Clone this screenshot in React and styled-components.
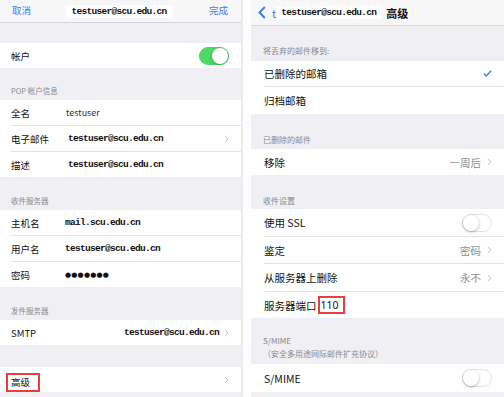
import React from 'react';
import styled, { createGlobalStyle } from 'styled-components';

const Global = createGlobalStyle`
  html, body { margin: 0; padding: 0; background: #fff; }
  body { font-family: "Noto Sans CJK SC", "Noto Sans", sans-serif; }
`;

const Page = styled.div`
  display: flex;
  width: 504px;
  height: 397px;
  overflow: hidden;
  background: #fff;
`;

const Panel = styled.div`
  flex: none;
  width: ${(p) => p.$w}px;
  height: 100%;
  margin-left: ${(p) => p.$ml || 0}px;
  background: #efeff4;
  border-right: ${(p) => (p.$edge ? '2px solid #e9ebf1' : 'none')};
  display: flex;
  flex-direction: column;
  overflow: hidden;
`;

const NavBar = styled.div`
  flex: none;
  height: ${(p) => p.$h}px;
  box-sizing: border-box;
  background: #f7f7f8;
  border-bottom: 1px solid #d6d6da;
  display: flex;
  align-items: center;
  justify-content: ${(p) => p.$justify || 'flex-start'};
  padding: ${(p) => p.$pad};
`;

const NavLink = styled.span`
  color: #3b7ef5;
  font-size: 9.5px;
  line-height: 1;
`;

const NavTitle = styled.span`
  background: #fff;
  font-family: "Liberation Mono", monospace;
  font-size: 9.5px;
  letter-spacing: -0.7px;
  font-weight: bold;
  color: #111;
  padding: 1px 6px 1px 4px;
  line-height: 11px;
`;

const BackGroup = styled.div`
  display: flex;
  align-items: center;
`;

const BlueT = styled.span`
  color: #3b7ef5;
  font-size: 11px;
  margin: 0 1px 0 6px;
`;

const NavHeading = styled.span`
  font-size: 11px;
  font-weight: 600;
  color: #111;
  margin-left: 4px;
`;

const Gap = styled.div`
  flex: none;
  height: ${(p) => p.$h}px;
`;

const SectionHeader = styled.div`
  flex: none;
  height: ${(p) => p.$h}px;
  box-sizing: border-box;
  display: flex;
  flex-direction: column;
  justify-content: flex-end;
  padding: 0 0 ${(p) => p.$pb}px ${(p) => p.$pl}px;
  font-size: ${(p) => p.$fs}px;
  line-height: 13px;
  color: #8a8a8f;
`;

const Group = styled.div`
  flex: none;
  background: #fff;
`;

const Row = styled.div`
  height: ${(p) => p.$h}px;
  display: flex;
  padding-left: ${(p) => p.$pl}px;
  &:last-child > div {
    border-bottom: none;
  }
`;

const RowInner = styled.div`
  flex: 1;
  display: flex;
  align-items: center;
  box-sizing: border-box;
  border-bottom: 1px solid #e4e4e7;
  padding-right: ${(p) => p.$pr}px;
  font-size: ${(p) => p.$fs}px;
  color: #111;
`;

const Label = styled.span`
  flex: none;
  width: ${(p) => (p.$w ? `${p.$w}px` : 'auto')};
  white-space: nowrap;
`;

const SansValue = styled.span`
  color: #333;
  font-size: 9px;
`;

const MonoValue = styled.span`
  font-family: "Liberation Mono", monospace;
  font-size: 9.5px;
  letter-spacing: -0.7px;
  font-weight: bold;
  color: #111;
  margin-left: ${(p) => p.$ml || 0}px;
  margin-right: ${(p) => p.$mr || 0}px;
  white-space: nowrap;
`;

const Dots = styled.span`
  font-family: "DejaVu Sans", sans-serif;
  font-size: 7px;
  letter-spacing: 0.2px;
  color: #111;
`;

const Spacer = styled.span`
  flex: 1;
`;

const Detail = styled.span`
  color: #8e8e93;
  font-size: 10.5px;
  margin-right: 6px;
`;

const Highlight = styled.span`
  border: 2px solid #e5403b;
  padding: ${(p) => p.$pad};
  margin-left: ${(p) => p.$ml || 0}px;
  line-height: 1;
  font-family: ${(p) => (p.$latin ? '"Noto Sans", sans-serif' : 'inherit')};
  align-self: ${(p) => p.$self || 'center'};
`;

const Track = styled.span`
  position: relative;
  flex: none;
  width: 30px;
  height: 18px;
  box-sizing: border-box;
  border-radius: 9px;
  background: ${(p) => (p.$on ? '#4cd964' : '#fff')};
  border: 1px solid ${(p) => (p.$on ? '#4cd964' : '#e3e3e6')};
`;

const Knob = styled.span`
  position: absolute;
  top: 0;
  left: ${(p) => (p.$on ? '12px' : '0')};
  width: 16px;
  height: 16px;
  border-radius: 50%;
  background: #fff;
  box-shadow: 0 1px 3px rgba(0, 0, 0, 0.28), 0 0 0 0.5px rgba(0, 0, 0, 0.06);
`;

const Toggle = ({ on }) => (
  <Track $on={on}>
    <Knob $on={on} />
  </Track>
);

const Chevron = () => (
  <svg width="5" height="8" viewBox="0 0 5 8">
    <path d="M0.8 0.8 L4 4 L0.8 7.2" fill="none" stroke="#c4c4c9" strokeWidth="1" />
  </svg>
);

const BackChevron = () => (
  <svg width="8" height="13" viewBox="0 0 8 13">
    <path d="M6.8 1 L1.5 6.5 L6.8 12" fill="none" stroke="#3b7ef5" strokeWidth="2" />
  </svg>
);

const Check = () => (
  <svg width="9" height="7" viewBox="0 0 9 7">
    <path d="M0.8 3.6 L3.2 6 L8.2 0.8" fill="none" stroke="#3b7ef5" strokeWidth="1.4" />
  </svg>
);

const EMAIL = 'testuser@scu.edu.cn';

function LeftPanel() {
  const row = (h, children) => (
    <Row $h={h} $pl={11}>
      <RowInner $pr={12} $fs={9.5}>{children}</RowInner>
    </Row>
  );
  return (
    <Panel $w={241} $edge>
      <NavBar $h={23} $justify="space-between" $pad="0 13px 0 12px">
        <NavLink>取消</NavLink>
        <NavTitle>{EMAIL}</NavTitle>
        <NavLink>完成</NavLink>
      </NavBar>
      <Gap $h={20} />
      <Group>
        {row(25, <>
          <Label>帐户</Label>
          <Spacer />
          <Toggle on />
        </>)}
      </Group>
      <SectionHeader $h={32} $pb={3} $pl={11} $fs={7.5}>POP 帐户信息</SectionHeader>
      <Group>
        {row(26, <>
          <Label $w={55}>全名</Label>
          <SansValue>testuser</SansValue>
        </>)}
        {row(26, <>
          <Label $w={55}>电子邮件</Label>
          <MonoValue $ml={2}>{EMAIL}</MonoValue>
          <Spacer />
          <Chevron />
        </>)}
        {row(25, <>
          <Label $w={55}>描述</Label>
          <MonoValue $ml={2}>{EMAIL}</MonoValue>
        </>)}
      </Group>
      <SectionHeader $h={33} $pb={3} $pl={11} $fs={7.5}>收件服务器</SectionHeader>
      <Group>
        {row(26, <>
          <Label $w={54}>主机名</Label>
          <MonoValue>mail.scu.edu.cn</MonoValue>
        </>)}
        {row(26, <>
          <Label $w={54}>用户名</Label>
          <MonoValue>{EMAIL}</MonoValue>
        </>)}
        {row(25, <>
          <Label $w={54}>密码</Label>
          <Dots>●●●●●●●</Dots>
        </>)}
      </Group>
      <SectionHeader $h={33} $pb={3} $pl={11} $fs={7.5}>发件服务器</SectionHeader>
      <Group>
        {row(25, <>
          <Label>SMTP</Label>
          <Spacer />
          <MonoValue $mr={5}>{EMAIL}</MonoValue>
          <Chevron />
        </>)}
      </Group>
      <Gap $h={22} />
      <Group>
        <Row $h={25} $pl={6}>
          <RowInner $pr={12} $fs={9.5}>
            <Highlight $pad="3px 8px 3px 3px" $self="flex-end">高级</Highlight>
            <Spacer />
            <Chevron />
          </RowInner>
        </Row>
      </Group>
    </Panel>
  );
}

function RightPanel() {
  const row = (h, children) => (
    <Row $h={h} $pl={13}>
      <RowInner $pr={13} $fs={10.5}>{children}</RowInner>
    </Row>
  );
  return (
    <Panel $w={254} $ml={8}>
      <NavBar $h={26} $pad="0 0 0 7px">
        <BackGroup>
          <BackChevron />
          <BlueT>t</BlueT>
          <NavTitle>{EMAIL}</NavTitle>
          <NavHeading>高级</NavHeading>
        </BackGroup>
      </NavBar>
      <SectionHeader $h={35} $pb={4} $pl={12} $fs={8}>将丢弃的邮件移到:</SectionHeader>
      <Group>
        {row(26, <>
          <Label>已删除的邮箱</Label>
          <Spacer />
          <Check />
        </>)}
        {row(27, <>
          <Label>归档邮箱</Label>
        </>)}
      </Group>
      <SectionHeader $h={35} $pb={3} $pl={12} $fs={8}>已删除的邮件</SectionHeader>
      <Group>
        {row(26, <>
          <Label>移除</Label>
          <Spacer />
          <Detail>一周后</Detail>
          <Chevron />
        </>)}
      </Group>
      <SectionHeader $h={34} $pb={2} $pl={12} $fs={8}>收件设置</SectionHeader>
      <Group>
        {row(28, <>
          <Label>使用 SSL</Label>
          <Spacer />
          <Toggle on={false} />
        </>)}
        {row(27, <>
          <Label>鉴定</Label>
          <Spacer />
          <Detail>密码</Detail>
          <Chevron />
        </>)}
        {row(28, <>
          <Label>从服务器上删除</Label>
          <Spacer />
          <Detail>永不</Detail>
          <Chevron />
        </>)}
        {row(26, <>
          <Label>服务器端口</Label>
          <Highlight $latin $pad="2px 4px 2px 1px" $ml={1}>110</Highlight>
        </>)}
      </Group>
      <SectionHeader $h={46} $pb={4} $pl={12} $fs={8}>
        <span>S/MIME</span>
        <span>（安全多用途网际邮件扩充协议）</span>
      </SectionHeader>
      <Group>
        {row(28, <>
          <Label>S/MIME</Label>
          <Spacer />
          <Toggle on={false} />
        </>)}
      </Group>
    </Panel>
  );
}

export default function App() {
  return (
    <>
      <Global />
      <Page>
        <LeftPanel />
        <RightPanel />
      </Page>
    </>
  );
}
